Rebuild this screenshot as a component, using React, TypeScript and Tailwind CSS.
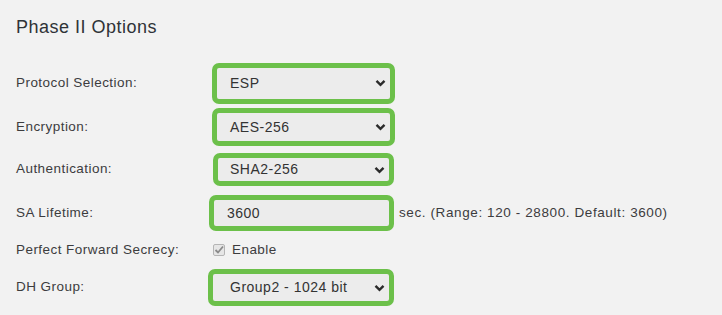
import React from "react";

const Chevron = () => (
  <svg width="11" height="8" viewBox="0 0 11 8" className="shrink-0">
    <polyline points="1.5,1.8 5.5,5.8 9.5,1.8" fill="none" stroke="#2b2b2b" strokeWidth="2.4" />
  </svg>
);

function Box({ w, h, ml, children }: { w: number; h: number; ml: number; children: React.ReactNode }) {
  return (
    <div
      className="border-[5px] border-[#6cc04a] rounded-[7px] bg-[#ececec] flex items-center"
      style={{ width: w, height: h, marginLeft: ml }}
    >
      {children}
    </div>
  );
}

function SelectBox({ w, h, ml, pl, value }: { w: number; h: number; ml: number; pl: number; value: string }) {
  return (
    <Box w={w} h={h} ml={ml}>
      <div className="flex-1 flex items-center justify-between pr-[4px]" style={{ paddingLeft: pl }}>
        <span className="text-[14px] tracking-[0.5px] text-[#333]">{value}</span>
        <Chevron />
      </div>
    </Box>
  );
}

export default function App() {
  const font = { fontFamily: "'Liberation Sans', Arial, sans-serif" };
  return (
    <div className="w-[722px] h-[315px] bg-[#f2f2f2] text-[#3c3c3e] overflow-hidden" style={font}>
      <div className="pl-[16px] pt-[14px] h-[60px]">
        <h1 className="text-[18px] leading-[26px] tracking-[0.5px] text-[#2f3337]">Phase II Options</h1>
      </div>
      <div className="flex flex-col pl-[16px] text-[13.5px] tracking-[0.45px]">
        <div className="flex items-center h-[45px] pt-[1px]">
          <div className="w-[196px]">Protocol Selection:</div>
          <SelectBox w={183} h={41} ml={0} pl={13} value="ESP" />
        </div>
        <div className="flex items-center h-[44px]">
          <div className="w-[196px]">Encryption:</div>
          <SelectBox w={183} h={38} ml={0} pl={13} value="AES-256" />
        </div>
        <div className="flex items-center h-[41px]">
          <div className="w-[196px]">Authentication:</div>
          <SelectBox w={181} h={33} ml={1} pl={12} value="SHA2-256" />
        </div>
        <div className="flex items-center h-[46px]">
          <div className="w-[193px]">SA Lifetime:</div>
          <Box w={185} h={36} ml={0}>
            <span className="pl-[13px] text-[14px] tracking-[0.5px] text-[#333]">3600</span>
          </Box>
          <span className="ml-[5px] tracking-[0.6px]">sec. (Range: 120 - 28800. Default: 3600)</span>
        </div>
        <div className="flex items-center h-[28px]">
          <div className="w-[197px]">Perfect Forward Secrecy:</div>
          <div className="w-[12px] h-[12px] border border-[#b5b5b5] bg-[#e6e6e6] rounded-[2px] flex items-center justify-center">
            <svg width="10" height="10" viewBox="0 0 10 10">
              <polyline points="1.5,5 4,7.5 9,1.5" fill="none" stroke="#8a8a8a" strokeWidth="1.8" />
            </svg>
          </div>
          <span className="ml-[7px]">Enable</span>
        </div>
        <div className="flex items-center h-[47px]">
          <div className="w-[192px]">DH Group:</div>
          <SelectBox w={186} h={37} ml={0} pl={17} value="Group2 - 1024 bit" />
        </div>
      </div>
    </div>
  );
}
